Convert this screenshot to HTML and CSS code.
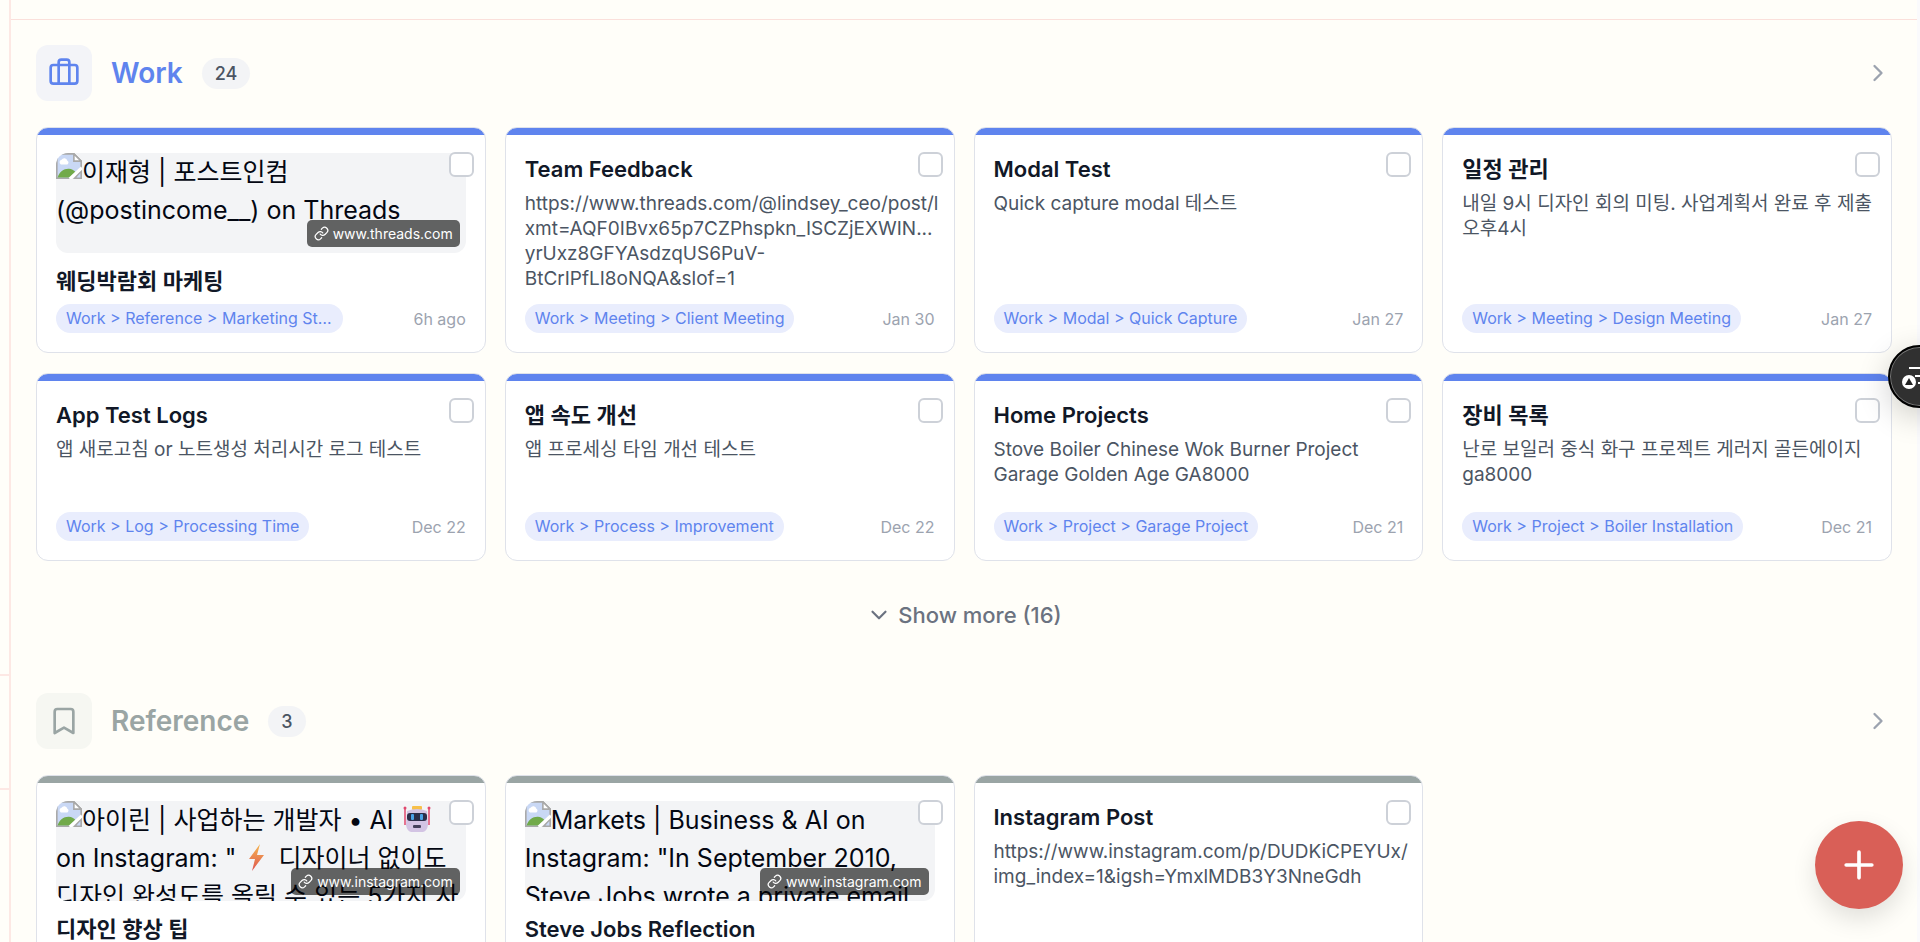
FILE: index.html
```html
<!DOCTYPE html>
<html lang="ko">
<head>
  <meta charset="UTF-8" />
  <meta name="viewport" content="width=device-width, initial-scale=1.0" />
  <title>Notes</title>
  <link rel="stylesheet" href="styles.css">
</head>
<body>

  <!-- Shared icons -->
  <svg class="sprite" aria-hidden="true">
    <symbol id="icon-link" viewBox="0 0 24 24">
      <path d="M10 13a5 5 0 0 0 7.54.54l3-3a5 5 0 0 0-7.07-7.07l-1.72 1.71" />
      <path d="M14 11a5 5 0 0 0-7.54-.54l-3 3a5 5 0 0 0 7.07 7.07l1.71-1.71" />
    </symbol>
    <symbol id="icon-broken" viewBox="0 0 16 16">
      <path d="M0.5 0.5H11L15.5 5V9L9.500 15.500H0.500Z" fill="#c9d8f5" stroke="#a9a9a9" />
      <path d="M1 15C2 11.500 5 9.500 8 9.700C9.500 9.800 11 10.600 12 11.700L8.500 15Z" fill="#71aa4a" />
      <path d="M3 7a1.500 1.500 0 0 1 .4-2.800A2 2 0 0 1 7 4.700 1.300 1.300 0 0 1 7 7Z" fill="#fff" />
      <path d="M11 0.500V5H15.500Z" fill="#fff" stroke="#a9a9a9" />
      <path d="M15.500 11V15.500H11.500Z" fill="#c9d8f5" stroke="#a9a9a9" />
      <path d="M8.500 16L16 9" stroke="#fff" stroke-width="2" />
    </symbol>
    <symbol id="icon-chevron" viewBox="0 0 24 24">
      <path d="m9 18 6-6-6-6" />
    </symbol>
  </svg>

  <div class="layout">
    <aside class="side">
      <div class="side-block"></div>
      <div class="side-block side-item"></div>
    </aside>

    <div class="content">
      <header class="topbar"></header>

      <main>
        <section class="section work">
          <div class="section-head">
            <span class="section-icon">
              <svg class="icon" viewBox="0 0 24 24"><path d="M16 20V4a2 2 0 0 0-2-2h-4a2 2 0 0 0-2 2v16" /><rect width="20" height="14" x="2" y="6" rx="2" /></svg>
            </span>
            <h2>Work</h2>
            <span class="count">24</span>
            <a class="more-link" href="#work" aria-label="Open Work"><svg class="icon"><use href="#icon-chevron" /></svg></a>
          </div>

          <div class="grid">
            <article class="card">
              <input class="check" type="checkbox" aria-label="Select 웨딩박람회 마케팅" />
              <div class="preview">
                <p><svg class="broken"><use href="#icon-broken" /></svg>이재형 | 포스트인컴 (@postincome__) on Threads</p>
                <span class="source"><svg class="icon"><use href="#icon-link" /></svg>www.threads.com</span>
              </div>
              <h3>웨딩박람회 마케팅</h3>
              <div class="meta"><span class="tag">Work &gt; Reference &gt; Marketing Strategy</span><time>6h ago</time></div>
            </article>

            <article class="card">
              <input class="check" type="checkbox" aria-label="Select Team Feedback" />
              <h3>Team Feedback</h3>
              <p class="desc">https://www.threads.com/@lindsey_ceo/post/l<br>xmt=AQF0IBvx65p7CZPhspkn_ISCZjEXWIN...<br>yrUxz8GFYAsdzqUS6PuV-<br>BtCrIPfLI8oNQA&amp;slof=1</p>
              <div class="meta"><span class="tag">Work &gt; Meeting &gt; Client Meeting</span><time>Jan 30</time></div>
            </article>

            <article class="card">
              <input class="check" type="checkbox" aria-label="Select Modal Test" />
              <h3>Modal Test</h3>
              <p class="desc">Quick capture modal 테스트</p>
              <div class="meta"><span class="tag">Work &gt; Modal &gt; Quick Capture</span><time>Jan 27</time></div>
            </article>

            <article class="card">
              <input class="check" type="checkbox" aria-label="Select 일정 관리" />
              <h3>일정 관리</h3>
              <p class="desc">내일 9시 디자인 회의 미팅. 사업계획서 완료 후 제출 오후4시</p>
              <div class="meta"><span class="tag">Work &gt; Meeting &gt; Design Meeting</span><time>Jan 27</time></div>
            </article>

            <article class="card">
              <input class="check" type="checkbox" aria-label="Select App Test Logs" />
              <h3>App Test Logs</h3>
              <p class="desc">앱 새로고침 or 노트생성 처리시간 로그 테스트</p>
              <div class="meta"><span class="tag">Work &gt; Log &gt; Processing Time</span><time>Dec 22</time></div>
            </article>

            <article class="card">
              <input class="check" type="checkbox" aria-label="Select 앱 속도 개선" />
              <h3>앱 속도 개선</h3>
              <p class="desc">앱 프로세싱 타임 개선 테스트</p>
              <div class="meta"><span class="tag">Work &gt; Process &gt; Improvement</span><time>Dec 22</time></div>
            </article>

            <article class="card">
              <input class="check" type="checkbox" aria-label="Select Home Projects" />
              <h3>Home Projects</h3>
              <p class="desc">Stove Boiler Chinese Wok Burner Project Garage Golden Age GA8000</p>
              <div class="meta"><span class="tag">Work &gt; Project &gt; Garage Project</span><time>Dec 21</time></div>
            </article>

            <article class="card">
              <input class="check" type="checkbox" aria-label="Select 장비 목록" />
              <h3>장비 목록</h3>
              <p class="desc">난로 보일러 중식 화구 프로젝트 게러지 골든에이지 ga8000</p>
              <div class="meta"><span class="tag">Work &gt; Project &gt; Boiler Installation</span><time>Dec 21</time></div>
            </article>
          </div>

          <button class="show-more" type="button">
            <svg class="icon" viewBox="0 0 24 24"><path d="m6 9 6 6 6-6" /></svg>
            Show more (16)
          </button>
        </section>

        <section class="section reference">
          <div class="section-head">
            <span class="section-icon">
              <svg class="icon" viewBox="0 0 24 24"><path d="m19 21-7-4-7 4V5a2 2 0 0 1 2-2h10a2 2 0 0 1 2 2v16z" /></svg>
            </span>
            <h2>Reference</h2>
            <span class="count">3</span>
            <a class="more-link" href="#reference" aria-label="Open Reference"><svg class="icon"><use href="#icon-chevron" /></svg></a>
          </div>

          <div class="grid">
            <article class="card">
              <input class="check" type="checkbox" aria-label="Select 디자인 향상 팁" />
              <div class="preview">
                <p><svg class="broken"><use href="#icon-broken" /></svg>아이린 | 사업하는 개발자 • AI <svg class="emoji robot" viewBox="0 0 28 28">
                  <path d="M2 2v18M26 2v18" stroke="#e0486e" stroke-width="1.500" />
                  <circle cx="2" cy="3" r="1.500" fill="#e0486e" /><circle cx="26" cy="3" r="1.500" fill="#e0486e" />
                  <rect x="9" y="1" width="10" height="4" rx="1" fill="#f7c04a" />
                  <path d="M4 6Q14 2 24 6L25 20Q24 26 20 27H8Q4 26 3 20Z" fill="#d3c4e4" />
                  <rect x="4" y="8" width="20" height="8" rx="3" fill="#2c2f4a" />
                  <rect x="8" y="9" width="3" height="6" rx="1" fill="#4aa3e8" /><rect x="17" y="9" width="3" height="6" rx="1" fill="#4aa3e8" />
                  <rect x="10" y="20" width="8" height="3" rx="1" fill="#44405c" />
                </svg> on Instagram: " <svg class="emoji" viewBox="0 0 28 28">
                  <linearGradient id="bolt-fill" x1="0" y1="0" x2="0" y2="1"><stop offset="0" stop-color="#f6b74f" /><stop offset="1" stop-color="#de5450" /></linearGradient>
                  <path d="M17 1L6 16h6l-3 12 12-16h-7z" fill="url(#bolt-fill)" />
                </svg> 디자이너 없이도 디자인 완성도를 올릴 수 있는 5가지 사</p>
                <span class="source"><svg class="icon"><use href="#icon-link" /></svg>www.instagram.com</span>
              </div>
              <h3>디자인 향상 팁</h3>
            </article>

            <article class="card">
              <input class="check" type="checkbox" aria-label="Select Steve Jobs Reflection" />
              <div class="preview">
                <p><svg class="broken"><use href="#icon-broken" /></svg>Markets | Business &amp; AI on Instagram: "In September 2010, Steve Jobs wrote a private email</p>
                <span class="source"><svg class="icon"><use href="#icon-link" /></svg>www.instagram.com</span>
              </div>
              <h3>Steve Jobs Reflection</h3>
            </article>

            <article class="card">
              <input class="check" type="checkbox" aria-label="Select Instagram Post" />
              <h3>Instagram Post</h3>
              <p class="desc">https://www.instagram.com/p/DUDKiCPEYUx/<br>img_index=1&amp;igsh=YmxlMDB3Y3NneGdh</p>
            </article>
          </div>
        </section>
      </main>
    </div>
  </div>

  <button class="assist" type="button" aria-label="Assistant">
    <svg viewBox="0 0 59 59">
      <path d="M19 21h24M25 29h20M28 36h16" stroke="#fff" stroke-width="2" />
      <circle cx="19" cy="35" r="7" fill="#fff" />
      <path d="M19 31l4 7h-8z" fill="#222" />
    </svg>
  </button>

  <button class="fab" type="button" aria-label="New note">
    <svg class="icon" viewBox="0 0 24 24"><path d="M5 12h14M12 5v14" /></svg>
  </button>

</body>
</html>
```
FILE: styles.css
```css
* {
  box-sizing: border-box;
}

body {
  margin: 0;
  height: 100vh;
  overflow: hidden;
  font-family: Inter, 'Noto Sans CJK KR', sans-serif;
  background: #fffef9;
  color: #030712;
}

h2,
h3,
p {
  margin: 0;
}

.sprite {
  display: none;
}

.icon {
  width: 24px;
  height: 24px;
  fill: none;
  stroke: currentColor;
  stroke-width: 2;
  stroke-linecap: round;
  stroke-linejoin: round;
}

.layout {
  display: flex;
  height: 100vh;
  overflow: hidden;
}

/* Left edge */
.side {
  width: 11px;
  border-right: 2px solid #fde8e4;
  display: flex;
  flex-direction: column;
}

.side-block {
  height: 676px;
  flex-shrink: 0;
  border-bottom: 2px solid #fde8e4;
}

.side-item {
  height: 114px;
}

.content {
  flex: 1;
  min-width: 0;
  border-right: 3px solid #fafafc;
}

.topbar {
  height: 20px;
  border-bottom: 1px solid #fbe0db;
}

main {
  padding: 25px;
}

/* Sections */
.section {
  --accent: #5f84ee;
  --icon-bg: #f3f4f8;
  display: flex;
  flex-direction: column;
  margin-bottom: 56px;
}

.reference {
  --accent: #9aa5a4;
  --icon-bg: #f6f7f2;
}

.section-head {
  display: flex;
  align-items: center;
  gap: 19px;
  margin-bottom: 26px;
  color: var(--accent);
}

.section-icon {
  display: flex;
  align-items: center;
  justify-content: center;
  width: 56px;
  height: 56px;
  border-radius: 12px;
  background: var(--icon-bg);
}

.section-icon .icon {
  width: 32px;
  height: 32px;
}

h2 {
  font-size: 28px;
  font-weight: 600;
  line-height: 40px;
}

.count {
  padding: 3px 13px;
  border-radius: 16px;
  background: #f3f4f6;
  color: #4b5563;
  font-size: 18px;
  font-weight: 500;
  line-height: 25px;
}

.more-link {
  display: flex;
  margin-left: auto;
  color: #9ca3af;
}

.more-link .icon {
  width: 28px;
  height: 28px;
}

/* Cards */
.grid {
  display: grid;
  grid-template-columns: repeat(4, 1fr);
  gap: 20px 19px;
}

.card {
  position: relative;
  display: flex;
  flex-direction: column;
  min-width: 0;
  min-height: 188px;
  padding: 25px 19px 19px;
  border: 1px solid #dfe2ea;
  border-radius: 12px;
  background: linear-gradient(var(--accent) 7px, #fff 7px);
}

.check {
  position: absolute;
  top: 24px;
  right: 11px;
  z-index: 1;
  appearance: none;
  width: 25px;
  height: 25px;
  margin: 0;
  border: 2px solid #cdd1d8;
  border-radius: 6px;
  background: #fff;
}

.check:checked {
  background: var(--accent);
}

.preview {
  position: relative;
  height: 100px;
  margin-bottom: 12px;
  overflow: hidden;
  border-radius: 12px;
  background: #f3f4f6;
  font-size: 25px;
  line-height: 38px;
}

.broken {
  float: left;
  width: 26px;
  height: 26px;
}

.emoji {
  width: 28px;
  height: 28px;
  vertical-align: -4px;
}

.robot {
  margin-left: 2px;
}

.source {
  position: absolute;
  right: 6px;
  bottom: 6px;
  display: flex;
  align-items: center;
  gap: 4px;
  padding: 0 7px;
  border-radius: 5px;
  background: rgba(0, 0, 0, 0.6);
  color: #fff;
  font-size: 14px;
  line-height: 27px;
}

.source .icon {
  width: 15px;
  height: 15px;
}

h3 {
  margin-bottom: 6px;
  font-size: 22px;
  font-weight: 600;
  line-height: 32px;
  color: #111827;
}

/* Long links may run a little into the card padding */
.desc {
  margin: 0 -8px 13px 0;
  color: #4b5563;
  font-size: 19px;
  line-height: 25px;
}

.meta {
  display: flex;
  align-items: center;
  justify-content: space-between;
  margin-top: auto;
}

.tag {
  max-width: 70%;
  padding: 0 10px;
  overflow: hidden;
  border-radius: 15px;
  background: #e9edfd;
  color: #5f84ee;
  font-size: 16px;
  line-height: 29px;
  text-overflow: ellipsis;
  white-space: nowrap;
}

time {
  color: #9ca3af;
  font-size: 16px;
}

.show-more {
  display: flex;
  align-items: center;
  align-self: center;
  gap: 6px;
  margin-top: 32px;
  padding: 6px 12px;
  border: none;
  background: none;
  color: #6b7280;
  font-family: inherit;
  font-size: 22px;
  font-weight: 500;
  line-height: 32px;
}

.show-more .icon {
  width: 26px;
  height: 26px;
}

/* Floating buttons */
.assist {
  position: fixed;
  top: 345px;
  right: -31px;
  z-index: 2;
  width: 63px;
  height: 63px;
  padding: 0;
  border: 2px solid #000;
  border-radius: 50%;
  background: #303030;
  box-shadow: inset 0 0 0 1px #777, 0 8px 32px rgba(0, 0, 0, 0.2);
}

.assist svg {
  display: block;
}

.fab {
  position: fixed;
  right: 17px;
  bottom: 33px;
  display: flex;
  align-items: center;
  justify-content: center;
  width: 88px;
  height: 88px;
  border: none;
  border-radius: 50%;
  background: #d95f57;
  color: #fff;
  box-shadow: 0 10px 24px rgba(0, 0, 0, 0.12);
}

.fab .icon {
  width: 44px;
  height: 44px;
}
```
